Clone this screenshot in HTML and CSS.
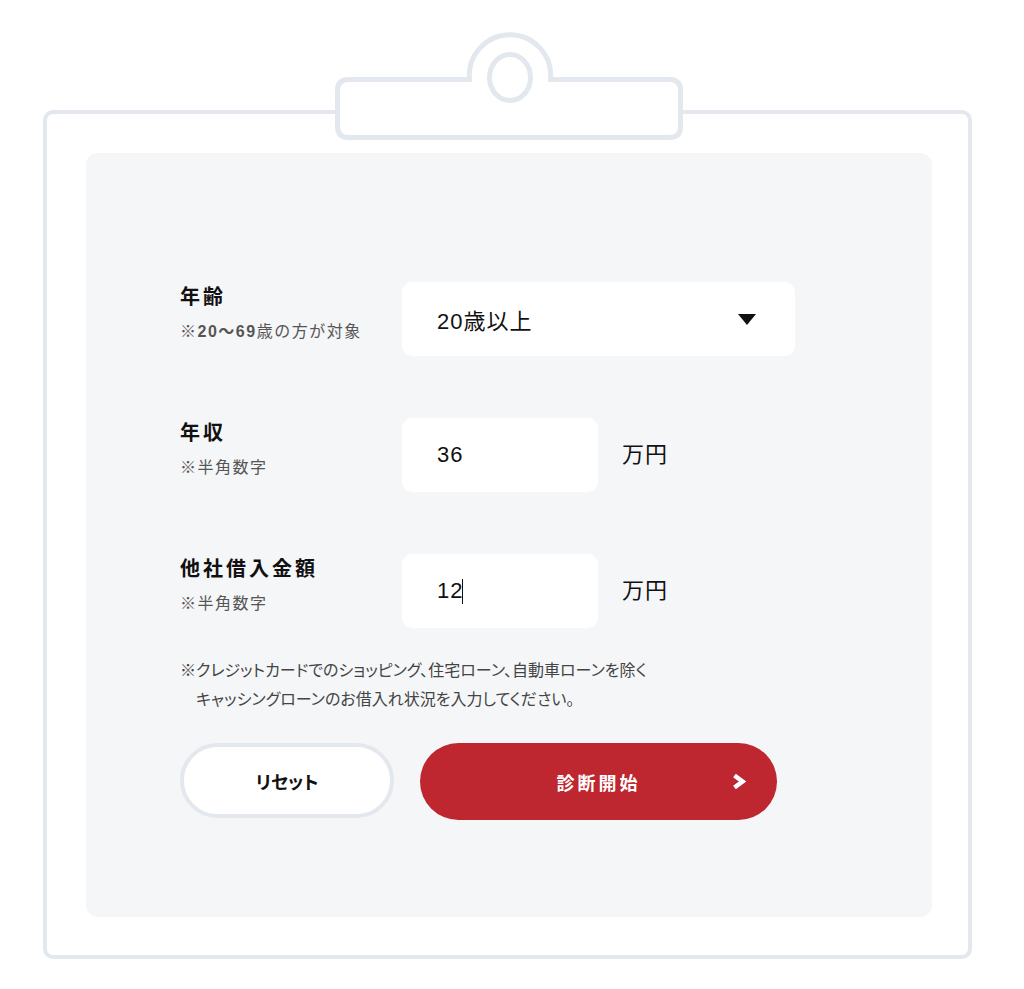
FILE: index.html
```html
<!DOCTYPE html>
<html lang="ja">
<head>
<meta charset="utf-8">
<title>診断フォーム</title>
<link rel="stylesheet" href="styles.css">
</head>
<body>
<div class="page">
  <div class="board">
    <div class="panel">
      <div class="rows">
        <div class="row">
          <div class="label">
            <div class="title">年齢</div>
            <div class="sub">※<b>20〜69</b>歳の方が対象</div>
          </div>
          <div class="field select">
            <span>20歳以上</span>
            <svg class="tri" width="18" height="11" viewBox="0 0 18 11"><path d="M0 0H18L9 11Z" fill="#111"/></svg>
          </div>
        </div>
        <div class="row">
          <div class="label">
            <div class="title">年収</div>
            <div class="sub">※半角数字</div>
          </div>
          <div class="field num">36</div>
          <span class="unit">万円</span>
        </div>
        <div class="row">
          <div class="label">
            <div class="title">他社借入金額</div>
            <div class="sub">※半角数字</div>
          </div>
          <div class="field num">12<span class="caret"></span></div>
          <span class="unit">万円</span>
        </div>
      </div>
      <p class="note">※クレジットカードでのショッピング、住宅ローン、自動車ローンを除く<br>キャッシングローンのお借入れ状況を入力してください。</p>
      <div class="buttons">
        <button class="btn reset" type="button">リセット</button>
        <button class="btn start" type="button">
          <span></span>
          <span class="start-label">診断開始</span>
          <svg class="chev" width="14" height="17" viewBox="0 0 14 17"><path d="M2.5 2.5L10.5 8.5L2.5 14.5" fill="none" stroke="#fff" stroke-width="4.5" stroke-linejoin="miter"/></svg>
        </button>
      </div>
    </div>
  </div>
  <svg class="clip" width="360" height="118" viewBox="0 0 360 118">
    <path d="M18.5 51.5H139.5A40.7 40.7 0 1 1 220.5 51.5H339.5Q350.5 51.5 350.5 62.5V98.5Q350.5 109.5 339.5 109.5H18.5Q7.5 109.5 7.5 98.5V62.5Q7.5 51.5 18.5 51.5Z" fill="#fff" stroke="#e2e8ee" stroke-width="5"/>
    <ellipse cx="180" cy="49.5" rx="20.5" ry="23" fill="#fff" stroke="#e2e8ee" stroke-width="5"/>
  </svg>
</div>
</body>
</html>
```

FILE: styles.css
```css
* { box-sizing: border-box; }

html, body {
  margin: 0;
  padding: 0;
  background: #ffffff;
}

body {
  font-family: "Liberation Sans", "Noto Sans CJK JP", sans-serif;
  color: #111111;
}

.page {
  position: relative;
  width: 1024px;
  height: 989px;
  padding: 110px 0 0 43px;
}

.board {
  width: 929px;
  height: 849px;
  border: 4px solid #e2e8ee;
  border-radius: 10px;
  padding: 39px 36px 38px 39px;
  background: #ffffff;
}

.panel {
  width: 846px;
  height: 764px;
  background: #f5f6f8;
  border-radius: 12px;
  padding: 129px 0 0 94px;
}

.rows {
  display: flex;
  flex-direction: column;
  gap: 62px;
}

.row {
  display: flex;
  align-items: flex-start;
}

.label {
  width: 222px;
  flex: none;
}

.title {
  font-size: 20px;
  font-weight: 700;
  line-height: 30px;
  letter-spacing: 3px;
}

.sub {
  margin-top: 8px;
  font-size: 16px;
  line-height: 24px;
  color: #555555;
  letter-spacing: 1.5px;
}

.sub b {
  font-weight: 700;
}

.field {
  height: 74px;
  background: #ffffff;
  border-radius: 10px;
  display: flex;
  align-items: center;
  padding-left: 35px;
  font-size: 22px;
  letter-spacing: 1px;
  color: #111111;
}

.select {
  width: 393px;
  justify-content: space-between;
  padding-right: 39px;
}

.tri {
  display: block;
}

.num {
  width: 196px;
}

.caret {
  display: inline-block;
  width: 1px;
  height: 25px;
  background: #111111;
  margin-left: -1px;
}

.unit {
  margin-left: 24px;
  font-size: 22px;
  line-height: 74px;
  letter-spacing: 1px;
}

.note {
  margin: 28px 0 0;
  padding-left: 16px;
  text-indent: -16px;
  font-size: 16px;
  line-height: 29px;
  color: #444444;
  font-feature-settings: "palt";
}

.buttons {
  margin-top: 29px;
  display: flex;
  align-items: flex-start;
  gap: 26px;
}

.btn {
  font-family: "Noto Sans CJK JP", sans-serif;
  font-size: 18px;
  font-weight: 700;
  border-radius: 40px;
  cursor: pointer;
  padding: 0;
}

.reset {
  width: 214px;
  height: 75px;
  background: #ffffff;
  border: 4px solid #e2e8ee;
  color: #111111;
  letter-spacing: 0;
  font-feature-settings: "palt";
}

.start {
  width: 357px;
  height: 77px;
  background: #be2630;
  border: none;
  color: #ffffff;
  display: grid;
  grid-template-columns: 1fr auto 1fr;
  align-items: center;
  padding-right: 31px;
  padding-left: 31px;
}

.start-label {
  letter-spacing: 3px;
}

.chev {
  justify-self: end;
  display: block;
}

.clip {
  position: absolute;
  left: 330px;
  top: 28px;
}
```
